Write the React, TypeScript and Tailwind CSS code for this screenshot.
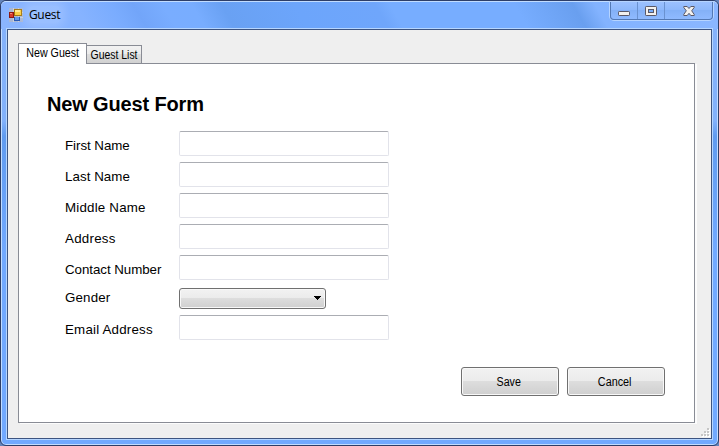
import { useState } from 'react';

type Field = { label: string; kind?: 'select'; row: string; text: string };

const fields: Field[] = [
  { label: 'First Name', row: 'h-[31px]', text: 'pt-[7px] tracking-[-0.05px]' },
  { label: 'Last Name', row: 'h-[31px]', text: 'pt-[7px] tracking-[0.05px]' },
  { label: 'Middle Name', row: 'h-[31px]', text: 'pt-[7px] tracking-[0.2px]' },
  { label: 'Address', row: 'h-[31px]', text: 'pt-[7px] tracking-[0.25px]' },
  { label: 'Contact Number', row: 'h-[33px]', text: 'pt-[7px] tracking-[-0.05px]' },
  { label: 'Gender', kind: 'select', row: 'h-[27px]', text: 'pt-[2px] tracking-[0.15px]' },
  { label: 'Email Address', row: 'h-[25px]', text: 'pt-[7px] tracking-[0.2px]' },
];

const face =
  'border border-[#707070] rounded-[3px] bg-[linear-gradient(#f2f2f2_0%,#ebebeb_48%,#dddddd_50%,#cfcfcf_100%)] shadow-[inset_0_0_0_1px_#f8f8f8]';

function AppIcon() {
  return (
    <svg width="14" height="14" viewBox="0 0 14 14" shapeRendering="crispEdges">
      <path d="M0 0h14v14H0z" fill="#a9b8d6" />
      <path d="M0 4.5h14M4.5 0v14M0 9.5h14M9.5 0v14" stroke="#cdd0d6" />
      <path d="M0 4h5v6H0z" fill="#8d1712" />
      <path d="M1 5h3v4H1z" fill="#d83a2c" />
      <path d="M1 5h2v1H1z" fill="#f28b77" />
      <path d="M5 1h8v7H5z" fill="#a47913" />
      <path d="M6 2h6v5H6z" fill="#f9cf45" />
      <path d="M6 2h5v2H6z" fill="#ffe995" />
      <path d="M5 9h6v4H5z" fill="#2959b4" />
      <path d="M6 9h4v3H6z" fill="#649bea" />
    </svg>
  );
}

function CaptionButtons() {
  return (
    <div className="flex h-[18px] w-[103px] rounded-b-[4px] border border-t-0 border-[#5379b5] bg-[linear-gradient(#9cc1ff_0%,#8eb8fb_45%,#84b1f7_50%,#8fbaff_100%)] shadow-[0_0_0_1px_#b6d4ff]">
      <button className="flex w-[27px] items-center justify-center border-r border-[#6a92d0]" aria-label="Minimize">
        <svg width="12" height="5" viewBox="0 0 12 5" className="mt-[6px]">
          <rect x=".5" y=".5" width="11" height="4" rx=".7" fill="#f3f1ee" stroke="#5a5866" />
        </svg>
      </button>
      <button className="flex w-[27px] items-center justify-center border-r border-[#6a92d0]" aria-label="Maximize">
        <svg width="12" height="10" viewBox="0 0 12 10" className="mt-px">
          <rect x=".5" y=".5" width="11" height="9" rx=".7" fill="#f3f1ee" stroke="#5a5866" />
          <rect x="3.5" y="3.5" width="5" height="3" fill="#78adfa" stroke="#5a5866" />
        </svg>
      </button>
      <button className="flex flex-1 items-center justify-center" aria-label="Close">
        <svg width="12" height="10" viewBox="0 0 12 10" className="mt-px">
          <path
            d="M.8.5h3.4L6 2.5 7.8.5h3.4v1L8.7 4.8l2.5 3.6v1.1H7.8L6 7.3 4.2 9.5H.8V8.4l2.5-3.6L.8 1.5z"
            fill="#f3f1ee"
            stroke="#5a5866"
          />
        </svg>
      </button>
    </div>
  );
}

function Grip() {
  return (
    <svg width="9" height="9" viewBox="0 0 9 9" shapeRendering="crispEdges">
      <path d="M7 1h2v2H7zM4 4h2v2H4zM7 4h2v2H7zM1 7h2v2H1zM4 7h2v2H4zM7 7h2v2H7z" fill="#fff" />
      <path d="M6 0h2v2H6zM3 3h2v2H3zM6 3h2v2H6zM0 6h2v2H0zM3 6h2v2H3zM6 6h2v2H6z" fill="#c6c6c6" />
    </svg>
  );
}

export default function App() {
  const [tab, setTab] = useState(0);
  return (
    <div className="h-[446px] w-[719px] bg-[#6283ba] font-['Liberation_Sans',Arial,sans-serif] text-black">
      <div className="flex h-full flex-col overflow-hidden rounded-[6px] border border-[#2d3e68] bg-[linear-gradient(#85b2fb_0px,#82b1fb_120px,#609bf0_135px,#71a9ff_250px)] shadow-[inset_0_0_0_1px_#c1dcff]">
        <header className="flex h-[28px] shrink-0 justify-between rounded-t-[5px] border-t border-[#c1dcff] bg-[linear-gradient(60deg,#8bb5ff_0%,#86b3ff_12%,#7aacfe_17%,#72a5f9_20%,#79adff_24%,#78adff_28%,#69a1f3_32%,#6ca5fb_42%,#6fa6fb_53%,#77adff_55%,#77adff_72%,#699fef_80%,#83b3ff_83%,#8bb7ff_100%)] pr-[5px] pl-2">
          <div className="flex items-start pt-[6px]">
            <AppIcon />
            <h1 className="-mt-[2px] ml-[6px] rounded bg-white/15 font-['Open_Sans','Noto_Sans',sans-serif] text-[12px] leading-[17px] tracking-[-0.35px] shadow-[0_0_8px_5px_rgba(255,255,255,0.15)]">
              Guest
            </h1>
          </div>
          <CaptionButtons />
        </header>
        <main className="mx-[6px] mb-[6px] flex min-h-0 flex-1 flex-col border border-[#3d5480] bg-[#efefef] shadow-[0_0_0_1px_#b6d6ff]">
          <div className="flex h-[33px] shrink-0 items-end pl-[10px] text-[12px] leading-[13px] whitespace-nowrap">
            <button
              onClick={() => setTab(0)}
              className="z-10 -mb-px flex h-[21px] w-[69px] justify-center border border-b-0 border-[#898c95] bg-white pt-[3px]"
            >
              <span className="scale-x-[0.89]">New Guest</span>
            </button>
            <button
              onClick={() => setTab(1)}
              className="flex h-[18px] w-[55px] justify-center border border-b-0 border-l-0 border-[#898c95] bg-[linear-gradient(#f2f2f2_0%,#ebebeb_49%,#dddddd_50%,#d1d1d1_100%)] pt-[3px]"
            >
              <span className="scale-x-[0.87]">Guest List</span>
            </button>
          </div>
          <section className="ml-[10px] flex h-[360px] w-[677px] shrink-0 flex-col border border-[#898c95] bg-white shadow-[2px_1px_0_#fcfcfc]">
            <h2 className="mt-[28px] ml-[28px] text-[20px] leading-[24px] font-bold tracking-[-0.15px]">New Guest Form</h2>
            <div className="mt-[15px] ml-[46px]">
              {fields.map((f) => (
                <label key={f.label} className={`flex items-start ${f.row}`}>
                  <span className={`w-[114px] text-[13.33px] leading-[16px] ${f.text}`}>{f.label}</span>
                  {f.kind === 'select' ? (
                    <button className={`flex h-[21px] w-[147px] items-center justify-end pr-[3px] ${face}`}>
                      <svg width="9" height="5" viewBox="0 0 9 5" shapeRendering="crispEdges">
                        <path d="M1 0h7v1H1zM2 1h5v1H2zM3 2h3v1H3zM4 3h1v1H4z" />
                      </svg>
                    </button>
                  ) : (
                    <input className="h-[25px] w-[210px] rounded-[2px] border border-[#e2e3ea] border-t-[#abadb3] bg-white px-1 text-[13px] outline-none" />
                  )}
                </label>
              ))}
            </div>
            <div className="mt-[27px] flex justify-end gap-2 pr-[29px] text-[12px]">
              <button className={`h-[29px] w-[98px] ${face}`}>
                <span className="-ml-[2px] inline-block scale-x-[0.89]">Save</span>
              </button>
              <button className={`h-[29px] w-[98px] ${face}`}>
                <span className="-ml-[3px] inline-block scale-x-[0.9]">Cancel</span>
              </button>
            </div>
          </section>
          <div className="flex flex-1 items-end justify-end pr-px pb-px">
            <Grip />
          </div>
        </main>
      </div>
    </div>
  );
}
